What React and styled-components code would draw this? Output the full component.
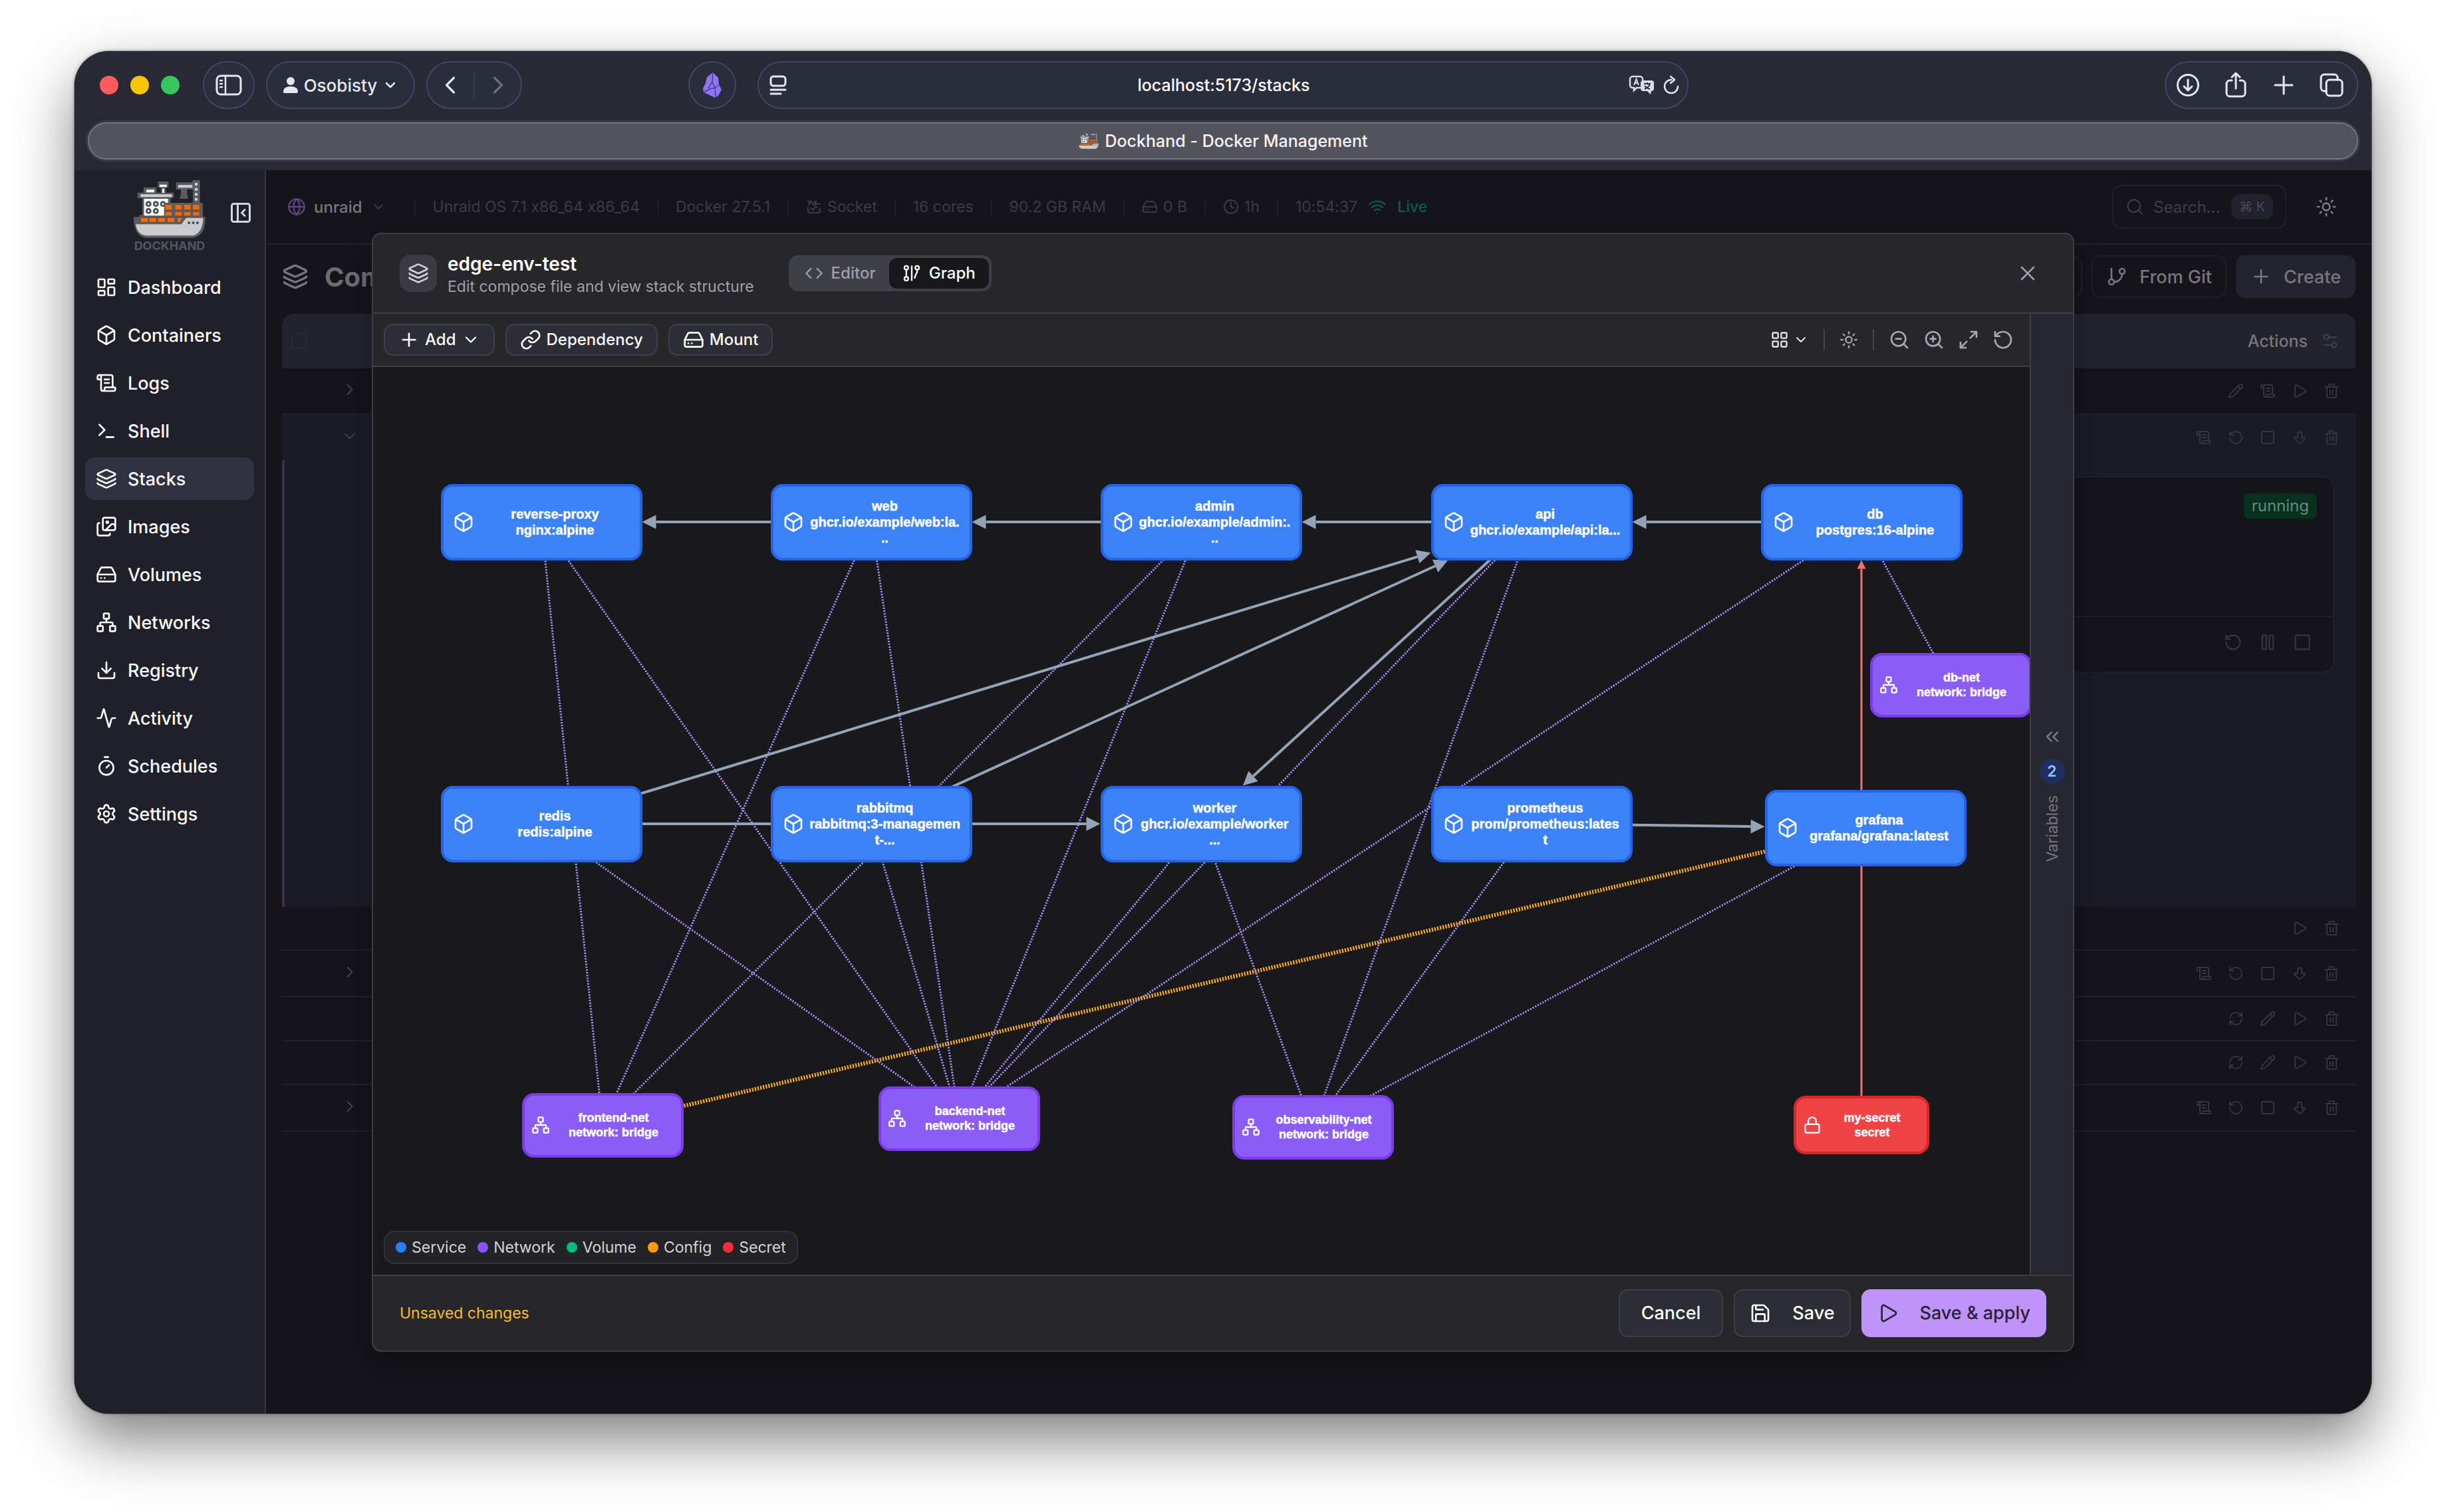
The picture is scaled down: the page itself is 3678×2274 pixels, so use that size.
import React from 'react';
import styled, { createGlobalStyle, css } from 'styled-components';
import {
  Activity, ArrowBigDown, Box, ChevronDown, ChevronLeft, ChevronRight, ChevronsLeft, Clock, Code,
  Download, GitBranch, Globe, HardDrive, Images, Layers, LayoutDashboard, LayoutGrid, Link, Lock,
  Maximize2, Network, PanelLeftClose, Pause, Pencil, Play, Plus, RefreshCw, RotateCcw, Save, ScrollText,
  Search, Settings, Settings2, Square, Sun, Terminal, Timer, Trash2, Wifi, X, ZoomIn, ZoomOut,
} from 'lucide-react';

const Global = createGlobalStyle`
  * { box-sizing: border-box; }
  body {
    margin: 0;
    background: #fff;
    font-family: Inter, "Liberation Sans", sans-serif;
    font-variant-ligatures: no-contextual;
    color: #f4f4f5;
  }
  button, input { font: inherit; color: inherit; }
  button { border: 0; padding: 0; background: none; display: inline-flex; align-items: center; justify-content: center; }
  h1, h2, p { margin: 0; }
  svg { display: block; flex: none; }
`;

/* ---------- browser window ---------- */

const Desktop = styled.div`
  min-height: 100vh;
  display: flex;
  padding: 77px 112px 148px;
`;

const Window = styled.div`
  flex: 1;
  display: flex;
  flex-direction: column;
  min-width: 0;
  overflow: hidden;
  border-radius: 52px;
  background: #15141a;
  box-shadow: 0 0 0 1px rgba(0, 0, 0, 0.3), 0 0 6px rgba(0, 0, 0, 0.3), 0 40px 90px rgba(0, 0, 0, 0.5);
`;

const Chrome = styled.header`
  padding: 15px 20px 16px;
  background: #272935;
  display: flex;
  flex-direction: column;
  gap: 20px;
`;

const ChromeRow = styled.div`
  display: grid;
  grid-template-columns: minmax(0, 1fr) minmax(0, 1400px) minmax(0, 1fr);
  gap: 32px;
`;

const ChromeSide = styled.div`
  display: flex;
  align-items: center;
  gap: 17px;
  padding-left: ${(p) => (p.$start ? 18 : 0)}px;
  justify-content: ${(p) => (p.$start ? 'flex-start' : 'flex-end')};
`;

const Lights = styled.div`
  display: flex;
  gap: 18px;
  margin-right: 18px;
`;

const Light = styled.span`
  width: 28px;
  height: 28px;
  border-radius: 50%;
  background: ${(p) => p.$color};
`;

const pill = css`
  height: 72px;
  border: 2px solid #424662;
  border-radius: 36px;
  background: #2a2d3c;
  color: #e6e6ee;
`;

const PillButton = styled.button`
  ${pill}
  width: ${(p) => p.$w}px;
  gap: 8px;
  font-size: 26px;
  font-weight: 500;
`;

const PillGroup = styled.div`
  ${pill}
  display: flex;
  align-items: center;
  gap: ${(p) => p.$gap}px;
  padding: ${(p) => p.$pad};
`;

const PillDivider = styled.span`
  width: 2px;
  height: 40px;
  background: #3a3d4c;
`;

const Spacer = styled.span`
  flex: 1;
`;

const AddressBar = styled.form`
  ${pill}
  display: flex;
  align-items: center;
  padding: 0 10px 0 16px;
  gap: 10px;
`;

const Address = styled.input`
  flex: 1;
  min-width: 0;
  padding: 0 0 0 48px;
  border: 0;
  background: none;
  text-align: center;
  font-size: 25px;
  font-weight: 500;
  color: #fff;
`;

const Tab = styled.div`
  height: 56px;
  border: 2px solid #74757f;
  border-radius: 28px;
  background: #53535e;
  box-shadow: 0 0 0 3px #383944;
  display: flex;
  align-items: center;
  justify-content: center;
  gap: 8px;
  font-size: 25px;
  font-weight: 500;
`;

/* ---------- application shell ---------- */

const Page = styled.div`
  flex: 1;
  position: relative;
  display: flex;
  min-height: 0;
`;

const Sidebar = styled.aside`
  width: 288px;
  background: #20202a;
  border-right: 2px solid #36363f;
`;

const Brand = styled.div`
  height: 128px;
  display: grid;
  grid-template-columns: 1fr auto 1fr;
  align-items: center;
`;

const BrandMark = styled.div`
  grid-column: 2;
  display: flex;
  flex-direction: column;
  align-items: center;
  padding-top: 8px;
  gap: 2px;
  font-size: 18px;
  line-height: 18px;
  font-weight: 700;
  color: #55565b;
`;

const Collapse = styled.button`
  justify-self: end;
  margin-right: 18px;
  color: #d4d4dc;
`;

const Nav = styled.nav`
  display: flex;
  flex-direction: column;
  gap: 8px;
  padding: 16px;
`;

const NavLink = styled.a`
  height: 64px;
  display: flex;
  align-items: center;
  gap: 16px;
  padding: 0 16px;
  border-radius: 14px;
  font-size: 27px;
  font-weight: 500;
  color: #fafafa;
  text-decoration: none;
  background: ${(p) => (p.$active ? '#303241' : 'none')};
`;

const Main = styled.main`
  flex: 1;
  min-width: 0;
  background: #15141a;
  color: #3a3b46;
`;

const TopBar = styled.div`
  height: 112px;
  padding: 0 52px 0 32px;
  border-bottom: 2px solid #22222b;
  display: flex;
  align-items: center;
  font-size: 23px;
`;

const EnvButton = styled.button`
  gap: 12px;
  padding-right: 16px;
  font-weight: 500;
  font-size: 24px;
  color: #77767b;
`;

const Meta = styled.span`
  display: flex;
  align-items: center;
  gap: 8px;
  white-space: nowrap;
`;

const MetaDivider = styled.span`
  width: 2px;
  height: 24px;
  margin: 0 26px;
  background: #202029;
`;

const Live = styled(Meta)`
  margin-left: 16px;
  gap: 16px;
  font-weight: 500;
  color: #075e43;
`;

const SearchBox = styled.label`
  height: 66px;
  width: 262px;
  margin-left: auto;
  padding: 0 18px;
  border: 2px solid #202028;
  border-radius: 14px;
  display: flex;
  align-items: center;
  gap: 14px;
`;

const SearchInput = styled.input`
  flex: 1;
  min-width: 0;
  border: 0;
  padding: 0;
  background: none;
  font-size: 24px;
  color: #3c3f49;
  &::placeholder { color: #3c3f49; opacity: 1; }
`;

const Kbd = styled.kbd`
  padding: 0 12px;
  border-radius: 14px;
  background: #21222d;
  font-family: inherit;
  font-size: 20px;
  line-height: 38px;
  white-space: nowrap;
  color: #484954;
`;

const ThemeButton = styled.button`
  margin-left: 44px;
  color: #7b7a7d;
`;

const Content = styled.div`
  padding: 16px 24px;
`;

const TitleRow = styled.div`
  display: flex;
  align-items: center;
  gap: 14px;
  height: 64px;
  margin-bottom: 24px;
  color: #77767b;
`;

const Title = styled.h1`
  flex: 1;
  margin-left: 10px;
  font-size: 40px;
  font-weight: 700;
  color: #6c6b70;
`;

const PageButton = styled.button`
  height: 64px;
  padding: 0 20px;
  gap: 18px;
  border: 2px solid ${(p) => (p.$filled ? '#23242f' : '#1f1f27')};
  border-radius: 14px;
  background: ${(p) => (p.$filled ? '#23242f' : 'none')};
  font-size: 27px;
  font-weight: 500;
  white-space: nowrap;
`;

const Table = styled.table`
  width: 100%;
  table-layout: fixed;
  border-collapse: separate;
  border-spacing: 0;

  th, td { padding: 0; text-align: left; }
`;

const Head = styled.th`
  height: 82px;
  background: #22232d;
  color: #77767b;
  font-size: 25px;
  font-weight: 500;
  width: ${(p) => p.$w || 'auto'};
  &:first-child { border-top-left-radius: 18px; }
  &:last-child { border-top-right-radius: 18px; }
`;

const Check = styled.input`
  appearance: none;
  display: block;
  width: 24px;
  height: 24px;
  margin: 0 14px;
  border: 2px solid #2a2a34;
  border-radius: 4px;
`;

const Cell = styled.td`
  height: ${(p) => p.$h}px;
  border-bottom: ${(p) => (p.$open ? '0' : '2px solid #202028')};
  background: ${(p) => (p.$open ? '#1a1b24' : 'none')};
`;

const RowToggle = styled.button`
  margin-left: 24px;
  color: #3d3e48;
`;

const Actions = styled.div`
  display: flex;
  align-items: center;
  justify-content: flex-end;
  gap: ${(p) => p.$gap}px;
  padding-right: 24px;
  color: ${(p) => p.$color};
`;

const ActionsLabel = styled.span`
  color: #77767b;
`;

const Expanded = styled.td`
  height: 672px;
  border-left: 4px solid #412d50;
  background: #1a1b24;
  vertical-align: top;
`;

const Services = styled.div`
  display: grid;
  grid-template-columns: 1fr 1fr;
  padding: 24px 32px;
`;

const ServiceCard = styled.article`
  grid-column: 2;
  height: 296px;
  display: flex;
  flex-direction: column;
  align-items: flex-end;
  border: 2px solid #202029;
  border-radius: 18px;
  background: #15141a;
  padding-top: 24px;
`;

const Status = styled.span`
  margin-right: 24px;
  padding: 0 12px;
  border-radius: 8px;
  background: #06311f;
  color: #6c8678;
  font-size: 24px;
  line-height: 38px;
`;

const CardFooter = styled.div`
  width: 100%;
  height: 84px;
  margin-top: auto;
  padding: 0 8px 6px 0;
  border-top: 2px solid #202029;
  display: grid;
  align-items: center;
`;

/* ---------- modal ---------- */

const Overlay = styled.div`
  position: absolute;
  inset: 0;
  display: flex;
  align-items: center;
  justify-content: center;
`;

const Modal = styled.section`
  width: 2560px;
  max-width: 92%;
  height: 90%;
  display: flex;
  flex-direction: column;
  overflow: hidden;
  border: 2px solid #3d3d43;
  border-radius: 14px;
  background: #27272a;
  box-shadow: 0 20px 40px rgba(0, 0, 0, 0.25);
`;

const ModalHeader = styled.header`
  height: 120px;
  padding: 0 40px;
  border-bottom: 2px solid #3d3d43;
  display: flex;
  align-items: center;
`;

const IconTile = styled.span`
  width: 56px;
  height: 56px;
  margin-right: 16px;
  border-radius: 16px;
  background: #3a3a40;
  display: grid;
  place-items: center;
  color: #d4d4d8;
`;

const ModalHeading = styled.div`
  padding-top: 6px;
`;

const ModalTitle = styled.h2`
  font-size: 28px;
  line-height: 34px;
  font-weight: 600;
  color: #fff;
`;

const ModalSub = styled.p`
  font-size: 23px;
  line-height: 34px;
  color: #9f9fa9;
`;

const Segments = styled.div`
  display: flex;
  margin-left: 52px;
  padding: 4px;
  border-radius: 14px;
  background: #3f3f46;
`;

const Segment = styled.button`
  height: 46px;
  padding: 0 20px;
  gap: 12px;
  border-radius: 12px;
  font-size: 24px;
  font-weight: 500;
  background: ${(p) => (p.$on ? '#18181b' : 'none')};
  color: ${(p) => (p.$on ? '#fff' : '#9f9fa9')};
`;

const Close = styled.button`
  margin-left: auto;
  margin-right: 10px;
  color: #9f9fa9;
`;

const ModalBody = styled.div`
  flex: 1;
  min-height: 0;
  display: flex;
`;

const GraphPane = styled.div`
  flex: 1;
  min-width: 0;
  display: flex;
  flex-direction: column;
`;

const Toolbar = styled.div`
  height: 80px;
  padding: 0 24px 0 16px;
  border-bottom: 2px solid #3d3d43;
  display: flex;
  align-items: center;
  gap: 16px;
`;

const ToolButton = styled.button`
  height: 48px;
  padding: 0 20px;
  gap: 8px;
  border: 2px solid #3f3f4b;
  border-radius: 14px;
  background: #2d2d35;
  font-size: 24px;
  font-weight: 500;
  color: #fafafa;
`;

const ToolIcons = styled.div`
  margin-left: auto;
  display: flex;
  align-items: center;
  gap: 20px;
  color: #a7a7b0;
`;

const LayoutButton = styled.button`
  gap: 6px;
  color: #e4e4e7;
`;

const ToolDivider = styled.span`
  width: 2px;
  height: 32px;
  margin: 0 2px;
  background: #46464d;
`;

const Canvas = styled.div`
  flex: 1;
  position: relative;
  overflow: hidden;
  background: #19191b;
`;

const EdgeLayer = styled.svg`
  position: absolute;
  inset: 0;
  width: 100%;
  height: 100%;
`;

const palette = {
  service: ['#3b82f6', '#2563eb'],
  network: ['#8b5cf6', '#7c3aed'],
  secret: ['#ef4444', '#dc2626'],
};

const NodeBox = styled.div`
  position: absolute;
  left: ${(p) => p.$x}px;
  top: ${(p) => p.$y}px;
  width: ${(p) => p.$w}px;
  height: ${(p) => p.$h}px;
  padding: 0 12px 0 ${(p) => (p.$kind === 'service' ? 14 : 10)}px;
  display: flex;
  align-items: center;
  gap: 6px;
  border: 4px solid ${(p) => palette[p.$kind][1]};
  border-radius: 18px;
  background: ${(p) => palette[p.$kind][0]};
  color: #fff;
`;

const NodeLabel = styled.div`
  flex: 1;
  min-width: 0;
  display: flex;
  flex-direction: column;
  align-items: center;
  font-family: "Liberation Sans", Arial, sans-serif;
  font-weight: 700;
  font-size: ${(p) => (p.$kind === 'service' ? 20 : 18)}px;
  line-height: ${(p) => (p.$kind === 'service' ? 24 : 22)}px;
  -webkit-text-stroke: 0.5px #fff;
  white-space: nowrap;
`;

const Legend = styled.ul`
  position: absolute;
  left: 16px;
  bottom: 16px;
  height: 50px;
  margin: 0;
  padding: 0 16px;
  display: flex;
  align-items: center;
  gap: 17px;
  list-style: none;
  border: 2px solid #333337;
  border-radius: 16px;
  background: #232325;
  font-size: 23px;
  color: #d4d4d8;
`;

const LegendItem = styled.li`
  display: flex;
  align-items: center;
  gap: 8px;

  &::before {
    content: "";
    width: 16px;
    height: 16px;
    border-radius: 50%;
    background: ${(p) => p.$color};
  }
`;

const Rail = styled.button`
  width: 65px;
  border-left: 2px solid #3d3d43;
  background: #272730;
  flex-direction: column;
  gap: 17px;
  font-size: 23px;
  color: #75757f;
`;

const Count = styled.span`
  width: 38px;
  height: 38px;
  border-radius: 50%;
  background: #1f2e5f;
  line-height: 38px;
  font-weight: 600;
  color: #8ec5ff;
`;

const RailLabel = styled.span`
  writing-mode: vertical-rl;
  transform: rotate(180deg);
`;

const ModalFooter = styled.footer`
  padding: 20px 40px;
  border-top: 2px solid #3d3d43;
  display: flex;
  align-items: center;
  gap: 16px;
  font-size: 23px;
`;

const Unsaved = styled.p`
  flex: 1;
  color: #f3bd2b;
`;

const FootButton = styled.button`
  height: 72px;
  padding: 0 ${(p) => (p.$icon ? 22 : 32)}px;
  gap: 32px;
  border: 2px solid ${(p) => (p.$primary ? '#be94fb' : '#3e3e4a')};
  border-radius: 14px;
  background: ${(p) => (p.$primary ? '#be94fb' : '#2c2c34')};
  color: ${(p) => (p.$primary ? '#2b2138' : '#fff')};
  font-size: 27px;
  font-weight: 500;
  white-space: nowrap;
`;

/* ---------- drawings ---------- */

const Ship = ({ width = 110, height = 90 }) => (
  <svg width={width} height={height} viewBox="30 42 330 270" aria-hidden="true">
    <g fill="#5b5c60">
      <path d="M142 54h48v28h-12v22h36v24h-14v30h144v56H58v-8h14v-76H50v-26h28V80h58v24h20V82h-14z" />
      <path d="M224 58h74V48h34v112h-32V90h-26v28h4v14h-36v-14h4V90h-22z" />
      <path d="M32 214h324c2 60-22 94-62 94H92c-38 0-58-36-60-94z" />
    </g>
    <path d="M150 68h32v11h-32zM90 91h36v12H90zM162 87h9v18h-9zM80 132h108v22l-16 6v48H80z" fill="#fff" />
    <path d="M64 112h142v12H64zM234 70h64v12h-64zM309 60h12v12h-12zM309 83h12v12h-12zM309 106h12v12h-12zM309 128h12v12h-12z" fill="#d0d1d4" />
    <g fill="#fff" stroke="#4b5553" strokeWidth="9">
      <circle cx="100" cy="155" r="9" /><circle cx="133" cy="155" r="9" /><circle cx="165" cy="155" r="9" />
      <circle cx="100" cy="187" r="9" /><circle cx="133" cy="187" r="9" />
    </g>
    <path d="M170 150h174v64H170z" fill="#5b5c60" />
    <g fill="#ff6a00">
      {[176, 221, 261, 301].map((x) => <path key={x} d={`M${x} 160h28v20h-28zM${x} 192h28v15h-28z`} />)}
      {[66, 104, 144, 186].map((x) => <path key={x} d={`M${x} 219h30v17h-30z`} />)}
      <path d="M232 219h20l-10 17h-10z" />
    </g>
    <path d="M42 247h206l22-29h76c0 50-22 80-54 80H94c-30 0-48-20-52-51z" fill="#c9cbcf" />
    <path d="M277 235h11v11h-11zM296 235h11v11h-11zM315 235h11v11h-11z" fill="#55565b" />
  </svg>
);

const Gem = () => (
  <svg width="32" height="40" viewBox="0 0 32 40" aria-hidden="true">
    <path d="M17 1l8 8 1 10 4 8-5 9-5 3-8-4-9-4-1-6 4-8 2-9z" fill="#8f74f4" />
    <path d="M17 1l-1 14-6 10M16 15l4 9-8 2-9 5M20 24l6-4M20 24l1 14" fill="none" stroke="#4b3a94" strokeWidth="1.5" />
  </svg>
);

const strokeProps = { fill: 'none', stroke: 'currentColor', strokeWidth: 3, strokeLinecap: 'round', strokeLinejoin: 'round', 'aria-hidden': true };

const SidebarGlyph = () => (
  <svg width="40" height="32" viewBox="0 0 40 32" {...strokeProps}>
    <rect x="2" y="2" width="36" height="28" rx="6" />
    <path d="M15 2v28M7 9h3M7 14h3M7 19h3" strokeWidth="2.5" />
  </svg>
);

const Person = () => (
  <svg width="24" height="26" viewBox="0 0 24 26" fill="currentColor" aria-hidden="true">
    <circle cx="12" cy="7" r="6" /><path d="M1 23c0-6 5-8 11-8s11 2 11 8c0 1-1 2-2 2H3c-1 0-2-1-2-2z" />
  </svg>
);

const ReaderGlyph = () => (
  <svg width="26" height="30" viewBox="0 0 26 30" {...strokeProps}>
    <rect x="2" y="2" width="22" height="14" rx="4" /><path d="M2 22h22M2 28h15" />
  </svg>
);

const Translate = () => (
  <svg width="40" height="30" viewBox="0 0 40 30" aria-hidden="true">
    <path d="M6 2h11a4 4 0 0 1 4 4v9a4 4 0 0 1-4 4h-5l-4 4v-4H6a4 4 0 0 1-4-4V6a4 4 0 0 1 4-4z" fill="none" stroke="#dcdce4" strokeWidth="2.5" />
    <path d="M8 15l3.500-9 3.500 9M9.500 12h4" fill="none" stroke="#dcdce4" strokeWidth="2" />
    <path d="M22 8h12a4 4 0 0 1 4 4v8a4 4 0 0 1-4 4l-1 5-5-5h-6a4 4 0 0 1-4-4v-8a4 4 0 0 1 4-4z" fill="#dcdce4" />
    <path d="M23 13h10M28 11v2M32 13c-1 4-4 6-8 8M24 16c2 3 5 4 8 5" fill="none" stroke="#2a2d3c" strokeWidth="2" />
  </svg>
);

const Reload = () => (
  <svg width="28" height="32" viewBox="0 0 28 32" {...strokeProps} strokeWidth="2.5">
    <path d="M14 8a10 10 0 1 0 10 10M13 3l6 5-6 5" />
  </svg>
);

const DownloadCircle = () => (
  <svg width="36" height="36" viewBox="0 0 36 36" {...strokeProps}>
    <circle cx="18" cy="18" r="15.500" /><path d="M18 10v16M12 20l6 6 6-6" />
  </svg>
);

const Share = () => (
  <svg width="36" height="40" viewBox="0 0 36 40" {...strokeProps}>
    <path d="M12 13H9a5 5 0 0 0-5 5v14a5 5 0 0 0 5 5h18a5 5 0 0 0 5-5V18a5 5 0 0 0-5-5h-3M18 25V3M12 8l6-6 6 6" />
  </svg>
);

const PlusGlyph = () => (
  <svg width="36" height="36" viewBox="0 0 36 36" {...strokeProps}><path d="M18 5v26M5 18h26" /></svg>
);

const TabsGlyph = () => (
  <svg width="36" height="36" viewBox="0 0 36 36" {...strokeProps}>
    <rect x="10" y="10" width="24" height="24" rx="5" />
    <path d="M10 27H7a5 5 0 0 1-5-5V7a5 5 0 0 1 5-5h15a5 5 0 0 1 5 5v3" />
  </svg>
);

const SocketGlyph = () => (
  <svg width="24" height="24" viewBox="0 0 24 24" {...strokeProps} strokeWidth="2">
    <path d="M3 3l4 4M8 3L4 9M15 3v5h6M3 13v5a3 3 0 0 0 3 3h12a3 3 0 0 0 3-3v-4M7 14l4 3 3-6 3 2" /><circle cx="12" cy="7" r="2" />
  </svg>
);

const GraphGlyph = () => (
  <svg width="28" height="28" viewBox="0 0 24 24" {...strokeProps} strokeWidth="2">
    <circle cx="5" cy="5" r="2.500" /><circle cx="5" cy="19" r="2.500" /><circle cx="19" cy="5" r="2.500" />
    <path d="M5 8v8M12 3v18M19 8v1c0 4-3 4-3 9" />
  </svg>
);

/* ---------- data ---------- */

const navItems = [
  ['Dashboard', LayoutDashboard], ['Containers', Box], ['Logs', ScrollText], ['Shell', Terminal],
  ['Stacks', Layers], ['Images', Images], ['Volumes', HardDrive], ['Networks', Network],
  ['Registry', Download], ['Activity', Activity], ['Schedules', Timer], ['Settings', Settings],
];

const A = {
  edit: [Pencil, 'Edit'], logs: [ScrollText, 'Logs'], start: [Play, 'Start'], remove: [Trash2, 'Remove'],
  restart: [RotateCcw, 'Restart'], stop: [Square, 'Stop'], down: [ArrowBigDown, 'Down'],
  sync: [RefreshCw, 'Sync'], pause: [Pause, 'Pause'],
};

const running = ['logs', 'restart', 'stop', 'down', 'remove'];
const rows = [
  { h: 70, toggle: true, actions: ['edit', 'logs', 'start', 'remove'] },
  { h: 68, toggle: true, open: true, actions: running },
  { h: 66, actions: ['start', 'remove'] },
  { h: 70, toggle: true, actions: running },
  { h: 66, actions: ['sync', 'edit', 'start', 'remove'] },
  { h: 66, actions: ['sync', 'edit', 'start', 'remove'] },
  { h: 70, toggle: true, actions: running },
];

const sizes = { service: [303, 115], network: [243, 97], secret: [204, 88] };
const kindIcon = { service: Box, network: Network, secret: Lock };

const nodes = {
  proxy: { kind: 'service', cx: 253, cy: 233, lines: ['reverse-proxy', 'nginx:alpine'] },
  web: { kind: 'service', cx: 749, cy: 233, lines: ['web', 'ghcr.io/example/web:la.', '..'] },
  admin: { kind: 'service', cx: 1245, cy: 233, lines: ['admin', 'ghcr.io/example/admin:.', '..'] },
  api: { kind: 'service', cx: 1742, cy: 233, lines: ['api', 'ghcr.io/example/api:la...'] },
  db: { kind: 'service', cx: 2238, cy: 233, lines: ['db', 'postgres:16-alpine'] },
  redis: { kind: 'service', cx: 253, cy: 687, lines: ['redis', 'redis:alpine'] },
  rabbit: { kind: 'service', cx: 749, cy: 687, lines: ['rabbitmq', 'rabbitmq:3-managemen', 't-...'] },
  worker: { kind: 'service', cx: 1245, cy: 687, lines: ['worker', 'ghcr.io/example/worker', '...'] },
  prom: { kind: 'service', cx: 1742, cy: 687, lines: ['prometheus', 'prom/prometheus:lates', 't'] },
  grafana: { kind: 'service', cx: 2244, cy: 693, lines: ['grafana', 'grafana/grafana:latest'] },
  front: { kind: 'network', cx: 345, cy: 1140, lines: ['frontend-net', 'network: bridge'] },
  back: { kind: 'network', cx: 881, cy: 1130, lines: ['backend-net', 'network: bridge'] },
  obs: { kind: 'network', cx: 1413, cy: 1143, lines: ['observability-net', 'network: bridge'] },
  dbnet: { kind: 'network', cx: 2372, cy: 478, lines: ['db-net', 'network: bridge'] },
  secret: { kind: 'secret', cx: 2238, cy: 1140, lines: ['my-secret', 'secret'] },
};

const networkEdges = [
  ['proxy', 'front'], ['proxy', 'back'], ['web', 'front'], ['web', 'back'], ['admin', 'front'], ['admin', 'back'],
  ['api', 'back'], ['api', 'obs'], ['db', 'back'], ['db', 'dbnet'], ['redis', 'back'], ['rabbit', 'back'],
  ['worker', 'back'], ['worker', 'obs'], ['prom', 'obs'], ['grafana', 'obs'],
];

const dependencyEdges = [
  ['web', 'proxy'], ['admin', 'web'], ['api', 'admin'], ['db', 'api'], ['redis', 'api'], ['rabbit', 'api'],
  ['api', 'worker'], ['redis', 'worker'], ['prom', 'grafana'],
];

/* Straight arrow from one node's centre to the border of another. */
function Arrow({ from, to, color, width, head }) {
  const a = nodes[from];
  const b = nodes[to];
  const [w, h] = sizes[b.kind];
  const dx = a.cx - b.cx;
  const dy = a.cy - b.cy;
  const len = Math.hypot(dx, dy);
  const t = Math.min(w / 2 / Math.abs(dx || 0.001), h / 2 / Math.abs(dy || 0.001));
  const tx = b.cx + dx * t;
  const ty = b.cy + dy * t;
  const ux = dx / len;
  const uy = dy / len;
  const bx = tx + ux * head;
  const by = ty + uy * head;
  const half = head / 2;
  return (
    <g>
      <line x1={a.cx} y1={a.cy} x2={bx} y2={by} stroke={color} strokeWidth={width} />
      <polygon points={`${tx},${ty} ${bx - uy * half},${by + ux * half} ${bx + uy * half},${by - ux * half}`} fill={color} />
    </g>
  );
}

function Graph() {
  return (
    <Canvas>
      <EdgeLayer aria-hidden="true">
        <line x1={nodes.grafana.cx} y1={nodes.grafana.cy} x2={nodes.front.cx} y2={nodes.front.cy}
          stroke="#fbab26" strokeWidth="6" strokeDasharray="2.2 2" />
        {networkEdges.map(([a, b]) => (
          <line key={a + b} x1={nodes[a].cx} y1={nodes[a].cy} x2={nodes[b].cx} y2={nodes[b].cy}
            stroke="#a78bfa" strokeWidth="3" strokeDasharray="2.2 2" />
        ))}
        {dependencyEdges.map(([a, b]) => <Arrow key={a + b} from={a} to={b} color="#94a3b8" width={4} head={21} />)}
        <Arrow from="secret" to="db" color="#f87171" width={3} head={13} />
      </EdgeLayer>
      {Object.entries(nodes).map(([id, n]) => {
        const [w, h] = sizes[n.kind];
        const Icon = kindIcon[n.kind];
        return (
          <NodeBox key={id} $kind={n.kind} $w={w} $h={h} $x={Math.round(n.cx - w / 2)} $y={Math.round(n.cy - h / 2)}>
            <Icon size={n.kind === 'service' ? 32 : 28} />
            <NodeLabel $kind={n.kind}>{n.lines.map((l) => <span key={l}>{l}</span>)}</NodeLabel>
          </NodeBox>
        );
      })}
      <Legend>
        <LegendItem $color="#2b7fff">Service</LegendItem>
        <LegendItem $color="#8e51ff">Network</LegendItem>
        <LegendItem $color="#00bc7d">Volume</LegendItem>
        <LegendItem $color="#fe9a00">Config</LegendItem>
        <LegendItem $color="#fb2c36">Secret</LegendItem>
      </Legend>
    </Canvas>
  );
}

function ActionIcons({ names, size = 24 }) {
  return (
    <Actions $gap={24} $color="#33343d">
      {names.map((n) => {
        const [Icon, label] = A[n];
        return <button key={n} type="button" aria-label={label}><Icon size={size} /></button>;
      })}
    </Actions>
  );
}

function BrowserChrome() {
  return (
    <Chrome>
      <ChromeRow>
        <ChromeSide $start>
          <Lights><Light $color="#ff5b5f" /><Light $color="#f9c700" /><Light $color="#35c759" /></Lights>
          <PillButton type="button" $w={78} aria-label="Sidebar"><SidebarGlyph /></PillButton>
          <PillButton type="button" $w={224}><Person />Osobisty<ChevronDown size={24} strokeWidth={2.5} /></PillButton>
          <PillGroup $gap={13} $pad="0 12px">
            <button type="button" aria-label="Back"><ChevronLeft size={44} strokeWidth={1.75} /></button>
            <PillDivider />
            <button type="button" aria-label="Forward"><ChevronRight size={44} strokeWidth={1.75} color="#6d6f7c" /></button>
          </PillGroup>
          <Spacer />
          <PillButton type="button" $w={72} aria-label="Notes extension"><Gem /></PillButton>
        </ChromeSide>
        <AddressBar>
          <ReaderGlyph />
          <Address aria-label="Address" defaultValue="localhost:5173/stacks" />
          <Translate />
          <Reload />
        </AddressBar>
        <ChromeSide>
          <PillGroup $gap={36} $pad="0 20px 0 15px">
            <button type="button" aria-label="Downloads"><DownloadCircle /></button>
            <button type="button" aria-label="Share"><Share /></button>
            <button type="button" aria-label="New tab"><PlusGlyph /></button>
            <button type="button" aria-label="Tab overview"><TabsGlyph /></button>
          </PillGroup>
        </ChromeSide>
      </ChromeRow>
      <Tab><Ship width={32} height={26} />Dockhand - Docker Management</Tab>
    </Chrome>
  );
}

function StackTable() {
  return (
    <Table>
      <thead>
        <tr>
          <Head $w="64px"><Check type="checkbox" aria-label="Select all" /></Head>
          <Head $w="76px" />
          <Head />
          <Head $w="320px">
            <Actions $gap={20} $color="#3d3e49"><ActionsLabel>Actions</ActionsLabel><Settings2 size={28} /></Actions>
          </Head>
        </tr>
      </thead>
      <tbody>
        {rows.map((r, i) => (
          <React.Fragment key={i}>
            <tr>
              <Cell $h={r.h} $open={r.open} />
              <Cell $h={r.h} $open={r.open}>
                {r.toggle && (
                  <RowToggle type="button" aria-label="Toggle details">
                    {r.open ? <ChevronDown size={28} /> : <ChevronRight size={28} />}
                  </RowToggle>
                )}
              </Cell>
              <Cell $h={r.h} $open={r.open} />
              <Cell $h={r.h} $open={r.open}><ActionIcons names={r.actions} /></Cell>
            </tr>
            {r.open && (
              <tr>
                <Expanded colSpan={4}>
                  <Services>
                    <ServiceCard>
                      <Status>running</Status>
                      <CardFooter><ActionIcons names={['restart', 'pause', 'stop']} size={28} /></CardFooter>
                    </ServiceCard>
                  </Services>
                </Expanded>
              </tr>
            )}
          </React.Fragment>
        ))}
      </tbody>
    </Table>
  );
}

function EditorModal() {
  return (
    <Overlay>
      <Modal role="dialog" aria-label="edge-env-test">
        <ModalHeader>
          <IconTile><Layers size={32} /></IconTile>
          <ModalHeading>
            <ModalTitle>edge-env-test</ModalTitle>
            <ModalSub>Edit compose file and view stack structure</ModalSub>
          </ModalHeading>
          <Segments>
            <Segment type="button"><Code size={28} />Editor</Segment>
            <Segment type="button" $on><GraphGlyph />Graph</Segment>
          </Segments>
          <Close type="button" aria-label="Close"><X size={36} strokeWidth={1.75} /></Close>
        </ModalHeader>
        <ModalBody>
          <GraphPane>
            <Toolbar>
              <ToolButton type="button"><Plus size={32} />Add<ChevronDown size={28} /></ToolButton>
              <ToolButton type="button"><Link size={32} />Dependency</ToolButton>
              <ToolButton type="button"><HardDrive size={32} />Mount</ToolButton>
              <ToolIcons>
                <LayoutButton type="button" aria-label="Layout"><LayoutGrid size={28} /><ChevronDown size={24} /></LayoutButton>
                <ToolDivider />
                <button type="button" aria-label="Theme"><Sun size={28} /></button>
                <ToolDivider />
                <button type="button" aria-label="Zoom out"><ZoomOut size={32} /></button>
                <button type="button" aria-label="Zoom in"><ZoomIn size={32} /></button>
                <button type="button" aria-label="Fit"><Maximize2 size={32} /></button>
                <button type="button" aria-label="Reset"><RotateCcw size={32} /></button>
              </ToolIcons>
            </Toolbar>
            <Graph />
          </GraphPane>
          <Rail type="button">
            <ChevronsLeft size={32} />
            <Count>2</Count>
            <RailLabel>Variables</RailLabel>
          </Rail>
        </ModalBody>
        <ModalFooter>
          <Unsaved>Unsaved changes</Unsaved>
          <FootButton type="button">Cancel</FootButton>
          <FootButton type="button" $icon><Save size={32} />Save</FootButton>
          <FootButton type="button" $icon $primary><Play size={32} />Save &amp; apply</FootButton>
        </ModalFooter>
      </Modal>
    </Overlay>
  );
}

export default function App() {
  return (
    <Desktop>
      <Global />
      <Window>
        <BrowserChrome />
        <Page>
          <Sidebar>
            <Brand>
              <BrandMark><Ship />DOCKHAND</BrandMark>
              <Collapse type="button" aria-label="Collapse sidebar"><PanelLeftClose size={36} /></Collapse>
            </Brand>
            <Nav>
              {navItems.map(([label, Icon]) => (
                <NavLink key={label} href={`#${label.toLowerCase()}`} $active={label === 'Stacks'}>
                  <Icon size={32} />{label}
                </NavLink>
              ))}
            </Nav>
          </Sidebar>
          <Main>
            <TopBar>
              <EnvButton type="button"><Globe size={28} color="#5b4480" />unraid<ChevronDown size={24} color="#3a3b46" /></EnvButton>
              <MetaDivider />
              <Meta>Unraid OS 7.1 x86_64 x86_64</Meta><MetaDivider />
              <Meta>Docker 27.5.1</Meta><MetaDivider />
              <Meta><SocketGlyph />Socket</Meta><MetaDivider />
              <Meta>16 cores</Meta><MetaDivider />
              <Meta>90.2 GB RAM</Meta><MetaDivider />
              <Meta><HardDrive size={24} />0 B</Meta><MetaDivider />
              <Meta><Clock size={24} />1h</Meta><MetaDivider />
              <Meta>10:54:37</Meta>
              <Live><Wifi size={28} />Live</Live>
              <SearchBox>
                <Search size={28} />
                <SearchInput placeholder="Search..." aria-label="Search" />
                <Kbd>⌘ K</Kbd>
              </SearchBox>
              <ThemeButton type="button" aria-label="Theme"><Sun size={32} /></ThemeButton>
            </TopBar>
            <Content>
              <TitleRow>
                <Layers size={40} />
                <Title>Com</Title>
                <PageButton type="button" aria-label="Refresh"><RefreshCw size={32} /></PageButton>
                <PageButton type="button"><GitBranch size={32} />From Git</PageButton>
                <PageButton type="button" $filled><Plus size={32} />Create</PageButton>
              </TitleRow>
              <StackTable />
            </Content>
          </Main>
          <EditorModal />
        </Page>
      </Window>
    </Desktop>
  );
}
